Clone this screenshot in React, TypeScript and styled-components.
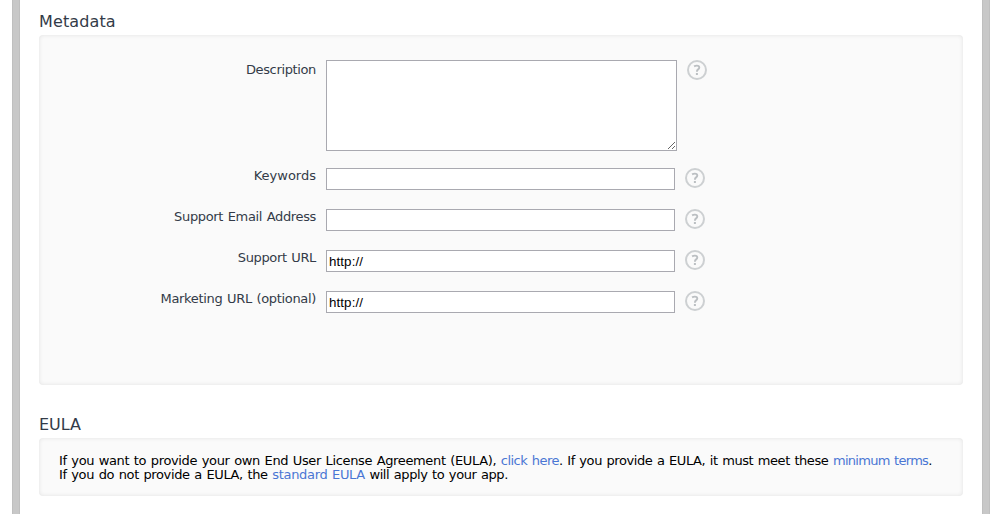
import React from "react";
import styled, { createGlobalStyle } from "styled-components";

const GlobalStyle = createGlobalStyle`
  *, *::before, *::after { box-sizing: border-box; }
  html, body { margin: 0; background: #fff; overflow: hidden; }
  body {
    font-family: Verdana, "DejaVu Sans", sans-serif;
    font-size: 13px;
    color: #333b48;
    word-spacing: 0.87px;
  }
`;

const Frame = styled.div`
  display: grid;
  grid-template-columns: 8px 962px 8px;
  height: 514px;
  margin-left: 12px;
`;

const Rail = styled.div`
  border: solid #bfbfbf;
  border-width: 0 1px;
  background: #c8c8c8;
`;

const Page = styled.main`
  padding: 0 19px;
  overflow: hidden;
`;

const Heading = styled.h2<{ $height: number; $spacing: number }>`
  display: flex;
  align-items: flex-end;
  height: ${(p) => p.$height}px;
  margin: 0;
  padding-bottom: 3px;
  font-size: 16px;
  line-height: 20px;
  font-weight: 400;
  letter-spacing: ${(p) => p.$spacing}px;
  white-space: nowrap;
`;

const Panel = styled.section<{ $height: number }>`
  width: 924px;
  height: ${(p) => p.$height}px;
  border-radius: 4px;
  background: #fafafa;
  box-shadow: inset 0 0 4px rgba(0, 0, 0, 0.1);
`;

const Form = styled.form`
  display: flex;
  flex-direction: column;
  padding-top: 25px;
`;

const Row = styled.div<{ $gap: number }>`
  display: grid;
  grid-template-columns: 277px auto 20px;
  justify-content: start;
  column-gap: 10px;
  align-items: start;
  margin-bottom: ${(p) => p.$gap}px;
`;

const Label = styled.label<{ $spacing: number; $top: number }>`
  padding-top: ${(p) => p.$top}px;
  line-height: 16px;
  text-align: right;
  white-space: nowrap;
  letter-spacing: ${(p) => p.$spacing}px;
`;

const TextInput = styled.input`
  width: 349px;
  height: 22px;
  margin: 0;
  padding: 2px;
  border: 1px solid #a9a9b0;
  border-radius: 0;
  background: #fff;
  color: #000;
  font: 13.333px "Liberation Sans", Arial, sans-serif;
  letter-spacing: 0.1px;
  outline: none;
`;

const TextArea = styled.textarea`
  display: block;
  width: 351px;
  height: 91px;
  margin: 0;
  padding: 2px;
  border: 1px solid #a9a9b0;
  border-radius: 0;
  background: #fff;
  font: 13px "Liberation Sans", Arial, sans-serif;
  outline: none;
  resize: both;
`;

const HelpSvg = styled.svg`
  display: block;
  width: 20px;
  height: 20px;
`;

const Help = () => (
  <HelpSvg viewBox="0 0 20 20" role="img" aria-label="Help">
    <circle cx="10" cy="10" r="9" fill="none" stroke="#cdd0d2" strokeWidth="2" />
    <path
      d="M7.1 6.4Q8.4 5.6 9.8 5.6Q12.3 5.6 12.3 7.6Q12.3 8.7 11.1 9.4Q9.9 10.2 9.9 11.8"
      fill="none"
      stroke="#bbbfc2"
      strokeWidth="1.9"
    />
    <rect x="8.9" y="13" width="2" height="2" fill="#bbbfc2" />
  </HelpSvg>
);

const Notice = styled.div`
  padding: 16px 20px 0;
  color: #000;
  line-height: 14px;
`;

const Line = styled.p`
  margin: 0;
  white-space: pre;
`;

const Text = styled.span<{ $spacing: number }>`
  letter-spacing: ${(p) => p.$spacing}px;
`;

const Link = styled.a<{ $spacing: number }>`
  color: #4a76d4;
  text-decoration: none;
  letter-spacing: ${(p) => p.$spacing}px;
`;

const fields = [
  { id: "keywords", label: "Keywords", value: "", spacing: 0 },
  { id: "email", label: "Support Email Address", value: "", spacing: -0.35 },
  { id: "support", label: "Support URL", value: "http://", spacing: -0.36 },
  { id: "marketing", label: "Marketing URL (optional)", value: "http://", spacing: -0.33 },
];

export default function App() {
  return (
    <>
      <GlobalStyle />
      <Frame>
        <Rail />
        <Page>
          <Heading $height={35} $spacing={0.12}>Metadata</Heading>
          <Panel $height={350}>
            <Form>
              <Row $gap={17}>
                <Label htmlFor="description" $spacing={-0.36} $top={2}>Description</Label>
                <TextArea id="description" />
                <Help />
              </Row>
              {fields.map((f) => (
                <Row key={f.id} $gap={19}>
                  <Label htmlFor={f.id} $spacing={f.spacing} $top={0}>{f.label}</Label>
                  <TextInput id={f.id} defaultValue={f.value} />
                  <Help />
                </Row>
              ))}
            </Form>
          </Panel>
          <Heading $height={53} $spacing={0}>EULA</Heading>
          <Panel $height={58}>
            <Notice>
              <Line>
                <Text $spacing={-0.364}>{"If you want to provide your own End User License Agreement (EULA), "}</Text>
                <Link href="#" $spacing={-0.52}>click here</Link>
                <Text $spacing={-0.43}>{". If you provide a EULA, it must meet these "}</Text>
                <Link href="#" $spacing={-0.7}>minimum terms</Link>
                <Text $spacing={0}>.</Text>
              </Line>
              <Line>
                <Text $spacing={-0.38}>{"If you do not provide a EULA, the "}</Text>
                <Link href="#" $spacing={-0.33}>standard EULA</Link>
                <Text $spacing={-0.42}>{" will apply to your app."}</Text>
              </Line>
            </Notice>
          </Panel>
        </Page>
        <Rail />
      </Frame>
    </>
  );
}
